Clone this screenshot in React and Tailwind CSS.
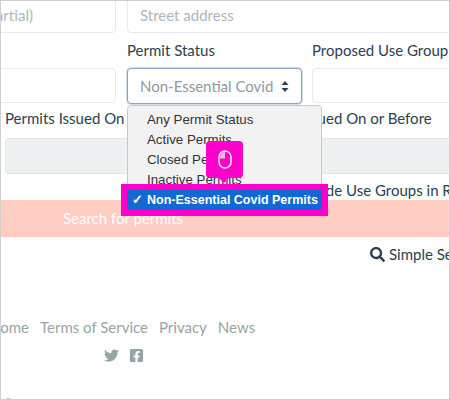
import { FaTwitter, FaFacebookSquare, FaSearch } from "react-icons/fa";

function TextBox({ className = "", children }) {
    return (
        <div className={`flex h-[35px] shrink-0 items-center rounded-[4px] border border-[#e6eaed] bg-white px-3 text-[15px] text-[#acb6c0] ${className}`}>
            {children}
        </div>
    );
}

function Label({ className = "", children }) {
    return <div className={`whitespace-nowrap text-[15px] leading-[20px] text-[#2c3e50] ${className}`}>{children}</div>;
}

function MouseTip() {
    return (
        <div className="absolute left-[205px] top-[140px] flex h-[37px] w-[37px] items-center justify-center rounded-[4px] bg-[#ff00cc]">
            <svg width="14" height="19" viewBox="0 0 14 19" fill="none">
                <rect x="1" y="1" width="12" height="17" rx="6" fill="#ff00cc" stroke="#fff" strokeWidth="1.4" />
                <path d="M7 2 V8.5 H2 V7 A5 5 0 0 1 7 2 Z" fill="#ffb3f0" />
            </svg>
            <div className="absolute bottom-[-5px] left-[13px] h-0 w-0 border-x-[5px] border-t-[5px] border-x-transparent border-t-[#ff00cc]" />
        </div>
    );
}

function PermitMenu() {
    return (
        <>
            <div className="absolute left-[126px] top-[104px] h-[106px] w-[195px] rounded-[4px] border border-[#c9c9c9] bg-[#f2f2f2] pl-[19px] pt-[4px] font-['Liberation_Sans',sans-serif] text-[13.3px] leading-[20px] text-[#333]">
                <div>Any Permit Status</div>
                <div>Active Permits</div>
                <div>Closed Permits</div>
                <div>Inactive Permits</div>
            </div>
            <div className="absolute left-[120px] top-[183px] border-[6px] border-[#ff00cc]">
                <div className="flex h-[20px] w-[195px] items-center whitespace-nowrap bg-[#1269d3] font-['Liberation_Sans',sans-serif] text-[12.5px] font-bold text-white">
                    <span className="w-[20px] shrink-0 pl-[5px] text-[13px]">✓</span>
                    <span>Non-Essential Covid Permits</span>
                </div>
            </div>
            <MouseTip />
        </>
    );
}

export default function App() {
    return (
        <div className="relative h-[400px] w-[450px] overflow-hidden border border-[#cfcfcf] bg-white font-['Lato',sans-serif]">
            <div className="-mt-[3px] w-[700px] -translate-x-[1px]">
                <div className="-ml-[59px] flex gap-[11px]">
                    <TextBox className="w-[175px]">
                        <span className="flex w-[79px] justify-end whitespace-nowrap">Name (partial)</span>
                    </TextBox>
                    <TextBox className="w-[500px]">Street address</TextBox>
                </div>

                <div className="mt-[7px] flex h-[20px]">
                    <Label className="ml-[127px] w-[185px]">Permit Status</Label>
                    <Label>Proposed Use Group</Label>
                </div>

                <div className="-ml-[59px] mt-[8px] flex">
                    <TextBox className="w-[175px]" />
                    <div className="ml-[11px] flex h-[36px] w-[175px] shrink-0 items-center justify-between rounded-[4px] border border-[#8aa4bf] bg-white pl-3 pr-[12px] text-[15px] text-[#8f99a3] shadow-[0_0_0_1px_#d5dee7]">
                        <span className="whitespace-nowrap">Non-Essential Covid</span>
                        <svg width="8" height="11" viewBox="0 0 8 11" fill="#2c3e50">
                            <path d="M4 0 L7.5 4 H0.5 Z M4 11 L0.5 7 H7.5 Z" />
                        </svg>
                    </div>
                    <TextBox className="ml-[10px] w-[175px]" />
                </div>

                <div className="mt-[4px] flex h-[20px]">
                    <Label className="ml-[5px] w-[242px]">Permits Issued On or After</Label>
                    <Label>Permits Issued On or Before</Label>
                </div>

                <div className="mt-[10px] flex gap-[10px] pl-[5px]">
                    <div className="h-[36px] w-[232px] rounded-[4px] border border-[#e3e7ea] bg-[#ecf0f1]" />
                    <div className="h-[36px] w-[300px] rounded-[4px] border border-[#e3e7ea] bg-[#ecf0f1]" />
                </div>

                <div className="mt-[6px] flex h-[20px]">
                    <Label className="ml-[291px]">Exclude Use Groups in Results</Label>
                </div>
            </div>

            <div className="flex h-[37px] items-center bg-[#ffcdc2] pl-[62px] text-[15px] text-white">
                Search for permits
            </div>

            <div className="mt-[7px] flex items-center whitespace-nowrap pl-[369px] text-[15px] leading-[20px] text-[#2c3e50]">
                <FaSearch className="mr-[4px] h-[15px] w-[15px] shrink-0" />
                Simple Search
            </div>

            <div className="mt-[53px] flex gap-[11px] whitespace-nowrap text-[15px] leading-[20px] text-[#95a5a6]">
                <span className="-ml-[12px]">Home</span>
                <span>Terms of Service</span>
                <span>Privacy</span>
                <span>News</span>
            </div>

            <div className="mt-[11px] flex gap-[10px] pl-[103px] text-[#95a5a6]">
                <FaTwitter className="h-[15px] w-[15px]" />
                <FaFacebookSquare className="h-[15px] w-[15px]" />
            </div>

            <div className="mt-[31px] whitespace-nowrap pl-[1px] text-[15px] leading-[20px] text-[#95a5a6]">
                © Social Explorer Inc. All Rights Reserved
            </div>

            <PermitMenu />
        </div>
    );
}
